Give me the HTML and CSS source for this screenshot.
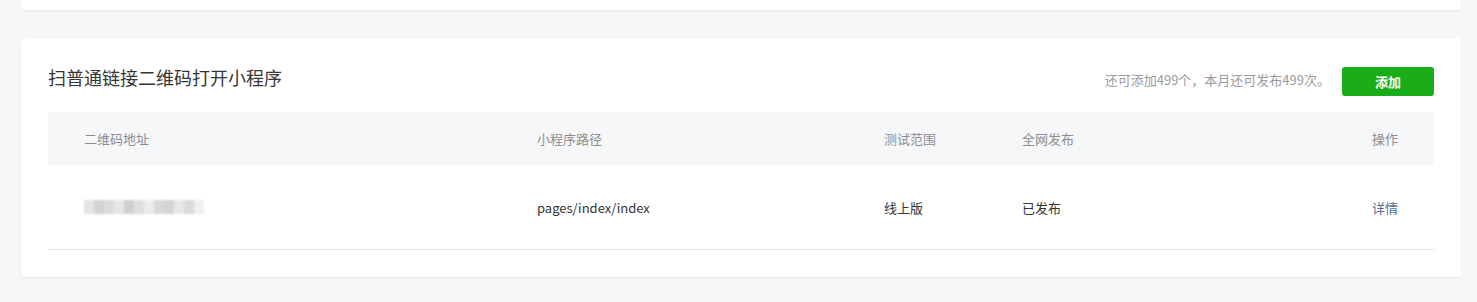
FILE: index.html
```html
<!doctype html>
<html>
  <head>
    <meta name="viewport" content="width=device-width,initial-scale=1.0" />
    <title>扫普通链接二维码打开小程序</title>
    <link rel="stylesheet" href="styles.css">
  </head>
  <body>
    <div class="page">
      <div class="card card-top"></div>

      <div class="card">
        <div class="card-head">
          <h2 class="card-title">扫普通链接二维码打开小程序</h2>
          <div class="card-extra">
            <span class="quota">还可添加499个，本月还可发布499次。</span>
            <button class="btn-add">添加</button>
          </div>
        </div>

        <div class="table">
          <div class="row row-head">
            <div class="cell">二维码地址</div>
            <div class="cell">小程序路径</div>
            <div class="cell">测试范围</div>
            <div class="cell">全网发布</div>
            <div class="cell cell-op">操作</div>
          </div>
          <div class="row row-body">
            <div class="cell">
              <!-- masked url -->
              <span class="mask">
                <i style="background:#e4e4e4"></i><i style="background:#d2d2d2"></i><i style="background:#dcdcdc"></i><i style="background:#e6e6e6"></i><i style="background:#cfcfcf"></i><i style="background:#dedede"></i><i style="background:#ececec"></i><i style="background:#d8d8d8"></i><i style="background:#d4d4d4"></i><i style="background:#e8e8e8"></i><i style="background:#dadada"></i><i style="background:#f0f0f0"></i>
              </span>
            </div>
            <div class="cell">pages/index/index</div>
            <div class="cell">线上版</div>
            <div class="cell">已发布</div>
            <div class="cell cell-op"><a class="link" href="#">详情</a></div>
          </div>
        </div>
      </div>
    </div>
  </body>
</html>
```

FILE: styles.css
```css
body {
  margin: 0;
  background: #f6f7f9;
  font-family: "Microsoft YaHei", "Noto Sans CJK SC", "Noto Sans", sans-serif;
  color: #353535;
}

.page {
  padding: 0 16px 26px 21px;
}

.card {
  background: #fff;
  border-radius: 4px;
  box-shadow: 0 1px 2px rgba(0, 0, 0, 0.08);
  padding: 0 27px 27px;
}
.card-top {
  height: 10px;
  padding: 0;
  border-radius: 0 0 4px 4px;
  margin-bottom: 28px;
}

.card-head {
  display: flex;
  align-items: center;
  justify-content: space-between;
  height: 74px;
}
.card-title {
  margin: 4px 0 0;
  font-size: 18px;
  font-weight: normal;
  color: #353535;
}
.card-extra {
  display: flex;
  align-items: center;
  gap: 12px;
  margin-top: 12px;
}
.quota {
  font-size: 13px;
  color: #9a9a9a;
  margin-bottom: 4px;
}
.btn-add {
  width: 92px;
  height: 29px;
  border: none;
  border-radius: 3px;
  background: #1aad19;
  color: #fff;
  font-family: inherit;
  font-size: 13px;
  font-weight: bold;
}

.row {
  display: grid;
  grid-template-columns: 453px 347px 138px 1fr 120px;
  align-items: center;
}
.row-head {
  height: 53px;
  background: #f6f7f9;
  color: #8d8d8d;
  font-size: 13px;
}
.row-body {
  height: 84px;
  border-bottom: 1px solid #e7e7eb;
  font-size: 13px;
}
.cell {
  padding: 0 36px;
}
.cell-op {
  text-align: right;
}

.link {
  color: #576b95;
  text-decoration: none;
}

.mask {
  display: flex;
  width: 120px;
  height: 14px;
  filter: blur(1.2px);
}
.mask i {
  flex: 1;
}
```
